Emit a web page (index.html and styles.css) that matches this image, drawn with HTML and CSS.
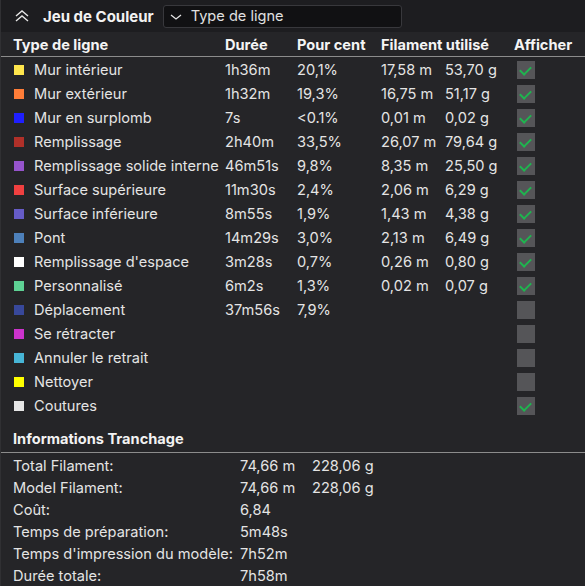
FILE: index.html
```html
<!DOCTYPE html>
<html>
<head>
    <title>Jeu de Couleur</title>
    <link rel="stylesheet" href="styles.css">
</head>
<body>
    <div class="panel">
        <div class="topbar">
            <svg class="collapse" width="16" height="12" viewBox="0 0 16 12">
                <path d="M2 6 L8 1 L14 6 M2 11 L8 6 L14 11" fill="none" stroke="#e6e6e6" stroke-width="1.4"/>
            </svg>
            <span class="title">Jeu de Couleur</span>
            <div class="select">
                <svg width="12" height="8" viewBox="0 0 12 8">
                    <path d="M1 2 L6 6 L11 2" fill="none" stroke="#e6e6e6" stroke-width="1.3"/>
                </svg>
                <span>Type de ligne</span>
            </div>
        </div>

        <div class="line-row head">
            <span class="name">Type de ligne</span>
            <span>Durée</span>
            <span>Pour cent</span>
            <span class="span2">Filament utilisé</span>
            <span>Afficher</span>
        </div>

        <div class="rows">
            <div class="line-row">
                <span class="name"><i class="sw" style="background:#ffe64d"></i>Mur intérieur</span>
                <span>1h36m</span><span>20,1%</span><span>17,58 m</span><span>53,70 g</span>
                <span class="check on"></span>
            </div>
            <div class="line-row">
                <span class="name"><i class="sw" style="background:#ff7d38"></i>Mur extérieur</span>
                <span>1h32m</span><span>19,3%</span><span>16,75 m</span><span>51,17 g</span>
                <span class="check on"></span>
            </div>
            <div class="line-row">
                <span class="name"><i class="sw" style="background:#1f1fff"></i>Mur en surplomb</span>
                <span>7s</span><span>&lt;0.1%</span><span>0,01 m</span><span>0,02 g</span>
                <span class="check on"></span>
            </div>
            <div class="line-row">
                <span class="name"><i class="sw" style="background:#b03029"></i>Remplissage</span>
                <span>2h40m</span><span>33,5%</span><span>26,07 m</span><span>79,64 g</span>
                <span class="check on"></span>
            </div>
            <div class="line-row">
                <span class="name"><i class="sw" style="background:#9654cc"></i>Remplissage solide interne</span>
                <span>46m51s</span><span>9,8%</span><span>8,35 m</span><span>25,50 g</span>
                <span class="check on"></span>
            </div>
            <div class="line-row">
                <span class="name"><i class="sw" style="background:#f04040"></i>Surface supérieure</span>
                <span>11m30s</span><span>2,4%</span><span>2,06 m</span><span>6,29 g</span>
                <span class="check on"></span>
            </div>
            <div class="line-row">
                <span class="name"><i class="sw" style="background:#665cc7"></i>Surface inférieure</span>
                <span>8m55s</span><span>1,9%</span><span>1,43 m</span><span>4,38 g</span>
                <span class="check on"></span>
            </div>
            <div class="line-row">
                <span class="name"><i class="sw" style="background:#4d80ba"></i>Pont</span>
                <span>14m29s</span><span>3,0%</span><span>2,13 m</span><span>6,49 g</span>
                <span class="check on"></span>
            </div>
            <div class="line-row">
                <span class="name"><i class="sw" style="background:#ffffff"></i>Remplissage d'espace</span>
                <span>3m28s</span><span>0,7%</span><span>0,26 m</span><span>0,80 g</span>
                <span class="check on"></span>
            </div>
            <div class="line-row">
                <span class="name"><i class="sw" style="background:#5ed194"></i>Personnalisé</span>
                <span>6m2s</span><span>1,3%</span><span>0,02 m</span><span>0,07 g</span>
                <span class="check on"></span>
            </div>
            <div class="line-row">
                <span class="name"><i class="sw" style="background:#38489b"></i>Déplacement</span>
                <span>37m56s</span><span>7,9%</span><span></span><span></span>
                <span class="check"></span>
            </div>
            <div class="line-row">
                <span class="name"><i class="sw" style="background:#cc33cc"></i>Se rétracter</span>
                <span></span><span></span><span></span><span></span>
                <span class="check"></span>
            </div>
            <div class="line-row">
                <span class="name"><i class="sw" style="background:#47b5d6"></i>Annuler le retrait</span>
                <span></span><span></span><span></span><span></span>
                <span class="check"></span>
            </div>
            <div class="line-row">
                <span class="name"><i class="sw" style="background:#ffff00"></i>Nettoyer</span>
                <span></span><span></span><span></span><span></span>
                <span class="check"></span>
            </div>
            <div class="line-row">
                <span class="name"><i class="sw" style="background:#e6e6e6"></i>Coutures</span>
                <span></span><span></span><span></span><span></span>
                <span class="check on"></span>
            </div>
        </div>

        <div class="section-title">Informations Tranchage</div>

        <div class="info">
            <div class="info-row"><span>Total Filament:</span><span>74,66 m</span><span>228,06 g</span></div>
            <div class="info-row"><span>Model Filament:</span><span>74,66 m</span><span>228,06 g</span></div>
            <div class="info-row"><span>Coût:</span><span>6,84</span><span></span></div>
            <div class="info-row"><span>Temps de préparation:</span><span>5m48s</span><span></span></div>
            <div class="info-row"><span>Temps d'impression du modèle:</span><span>7h52m</span><span></span></div>
            <div class="info-row"><span>Durée totale:</span><span>7h58m</span><span></span></div>
        </div>
    </div>
</body>
</html>
```

FILE: styles.css
```css
body {
    margin: 0;
    background-color: #252528;
    font-family: Inter, "Noto Sans", sans-serif;
    font-size: 14.6px;
    color: #e4e4e4;
}

.panel {
    width: 585px;
    height: 586px;
    overflow: hidden;
    border-left: 1px solid #303033;
    box-sizing: border-box;
}

.topbar {
    height: 32px;
    display: flex;
    align-items: center;
    background-color: #1d1d20;
    padding-left: 13px;
}

.collapse {
    margin-right: 13px;
}

.title {
    font-weight: 700;
    color: #f2f2f2;
    font-size: 15px;
}

.select {
    margin-left: 9px;
    width: 239px;
    height: 23px;
    box-sizing: border-box;
    display: flex;
    align-items: center;
    background-color: #111113;
    border: 1px solid #38383c;
    border-radius: 3px;
    padding-left: 6px;
    font-size: 14.6px;
    color: #e0e0e0;
}

.select svg {
    margin-right: 9px;
    margin-top: 1px;
}

.line-row {
    display: grid;
    grid-template-columns: 212px 72px 84px 64px 69px 1fr;
    align-items: center;
    height: 24px;
    padding-left: 12px;
    white-space: nowrap;
}

.line-row.head {
    height: 23px;
    padding-top: 1px;
    font-weight: 700;
    color: #f4f4f4;
    border-bottom: 1px solid #8c8c8c;
}

.head .span2 {
    grid-column: span 2;
}

.rows {
    padding-top: 1px;
}

.name {
    display: flex;
    align-items: center;
}

.sw {
    width: 10px;
    height: 10px;
    margin-left: 1px;
    margin-right: 10px;
    flex: none;
}

.check {
    width: 18px;
    height: 18px;
    margin-left: 3px;
    background-color: #555558;
    position: relative;
}

.check.on::after {
    content: "";
    position: absolute;
    left: 5px;
    top: 3px;
    width: 5px;
    height: 9px;
    border-right: 2.5px solid #1fb54f;
    border-bottom: 2.5px solid #1fb54f;
    transform: rotate(45deg);
}

.section-title {
    margin-top: 9px;
    padding-left: 12px;
    height: 25px;
    line-height: 25px;
    font-weight: 700;
    color: #f2f2f2;
    border-bottom: 1px solid #8c8c8c;
}

.info {
    padding-top: 2px;
}

.info-row {
    display: grid;
    grid-template-columns: 227px 72px 1fr;
    height: 22px;
    align-items: center;
    padding-left: 12px;
    white-space: nowrap;
}
```
